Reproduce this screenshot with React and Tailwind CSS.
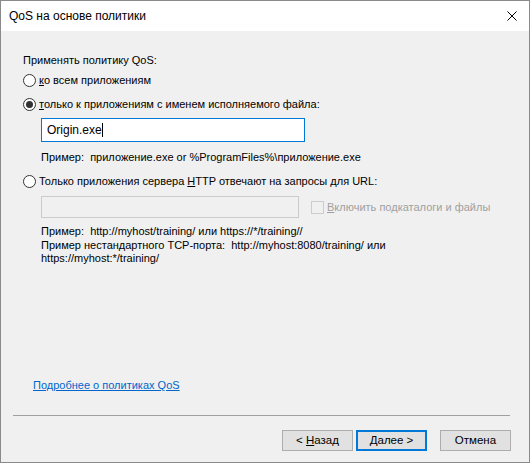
import React from "react";

// Радиокнопка в стиле Windows
const Radio = ({ checked }) => (
  <span className="w-[13px] h-[13px] rounded-full border border-[#333333] bg-white flex items-center justify-center shrink-0">
    {checked && <span className="w-[7px] h-[7px] rounded-full bg-[#333333]" />}
  </span>
);

const Btn = ({ children, primary }) => (
  <button
    className={
      "w-[71px] h-[21px] bg-[#e1e1e1] text-[11.5px] text-black leading-none flex items-center justify-center " +
      (primary ? "border-2 border-[#0078d7]" : "border border-[#adadad]")
    }
  >
    <span>{children}</span>
  </button>
);

export default function App() {
  return (
    <div
      className="w-[530px] h-[463px] flex flex-col border border-[#8a8a8a] bg-[#f0f0f0] text-[11px] text-black"
      style={{ fontFamily: '"Segoe UI", "Liberation Sans", Arial, sans-serif' }}
    >
      {/* заголовок окна */}
      <div className="h-[30px] bg-white flex items-center justify-between pl-[8px] pr-[12px] shrink-0">
        <span className="text-[12px]">QoS на основе политики</span>
        <svg width="10" height="10" viewBox="0 0 10 10">
          <path d="M0.5 0.5 L9.5 9.5 M9.5 0.5 L0.5 9.5" stroke="#000" strokeWidth="1" fill="none" />
        </svg>
      </div>

      <div className="flex-1 flex flex-col pl-[22px] pr-[18px] pt-[21px]">
        <div className="leading-[16px]">Применять политику QoS:</div>

        <div className="flex items-center gap-[3px] mt-[4px] leading-[16px]">
          <Radio />
          <span><u>к</u>о всем приложениям</span>
        </div>

        <div className="flex items-center gap-[3px] mt-[8px] leading-[16px]">
          <Radio checked />
          <span><u>т</u>олько к приложениям с именем исполняемого файла:</span>
        </div>

        <div className="ml-[18px] mt-[6px] w-[264px] h-[24px] border border-[#0078d7] bg-white flex items-center px-[5px] text-[12px]">
          <span>Origin.exe</span>
          <span className="w-px h-[14px] bg-black" />
        </div>

        <div className="ml-[18px] mt-[7px] leading-[16px]">
          Пример:&nbsp; приложение.exe or %ProgramFiles%\приложение.exe
        </div>

        <div className="flex items-center gap-[3px] mt-[8px] leading-[16px]">
          <Radio />
          <span>Только приложения сервера <u>H</u>TTP отвечают на запросы для URL:</span>
        </div>

        <div className="ml-[18px] mt-[7px] flex items-center">
          <div className="w-[258px] h-[22px] border border-[#cccccc] bg-[#f0f0f0]" />
          <span className="ml-[12px] w-[13px] h-[13px] border border-[#cccccc] bg-[#f0f0f0]" />
          <span className="ml-[3px] text-[#a0a0a0]"><u>В</u>ключить подкаталоги и файлы</span>
        </div>

        <div className="ml-[18px] mt-[7px] leading-[13.5px]">
          <div>Пример:&nbsp; http://myhost/training/ или https://*/training//</div>
          <div>Пример нестандартного TCP-порта:&nbsp; http://myhost:8080/training/ или</div>
          <div>https://myhost:*/training/</div>
        </div>

        <div className="flex-1" />

        <div className="ml-[10px] leading-[16px] text-[#0066cc] underline">Подробнее о политиках QoS</div>

        <div className="mt-[22px] -ml-[10px] mr-[1px] h-px bg-[#a0a0a0]" />

        <div className="flex justify-end mt-[14px] mb-[11px]">
          <Btn>&lt; <u>Н</u>азад</Btn>
          <span className="w-[3px]" />
          <Btn primary><u>Д</u>алее &gt;</Btn>
          <span className="w-[13px]" />
          <Btn>Отмена</Btn>
        </div>
      </div>
    </div>
  );
}
